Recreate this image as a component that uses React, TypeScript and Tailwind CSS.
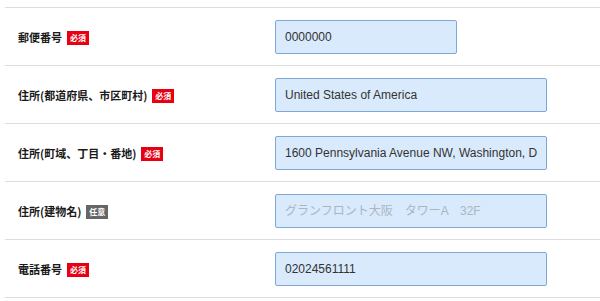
import React from "react";

type Row = {
  label: string;
  required: boolean;
  value?: string;
  placeholder?: string;
  short?: boolean;
};

const rows: Row[] = [
  { label: "郵便番号", required: true, value: "0000000", short: true },
  { label: "住所(都道府県、市区町村)", required: true, value: "United States of America" },
  { label: "住所(町域、丁目・番地)", required: true, value: "1600 Pennsylvania Avenue NW, Washington, DC 20500" },
  { label: "住所(建物名)", required: false, placeholder: "グランフロント大阪　タワーA　32F" },
  { label: "電話番号", required: true, value: "02024561111" },
];

export default function App() {
  return (
    <div className="w-[600px] h-[301px] bg-white pt-[7px] pl-[5px] overflow-hidden">
      <div className="border-t border-[#dddddd]">
        {rows.map((r, i) => (
          <div key={i} className="flex items-center h-[58px] border-b border-[#dddddd]">
            <div
              className="w-[258px] pl-[13px] pt-[2px] flex items-center gap-[5px] text-[11px] font-bold text-[#1a1a1a]"
              style={{ fontFamily: '"Noto Sans CJK JP", "Liberation Sans", sans-serif' }}
            >
              <span>{r.label}</span>
              {r.required ? (
                <span className="inline-flex items-center justify-center w-[22px] h-[14px] bg-[#e60012] text-white text-[8px] font-bold leading-none">
                  必須
                </span>
              ) : (
                <span className="inline-flex items-center justify-center w-[22px] h-[14px] bg-[#666666] text-white text-[8px] font-bold leading-none">
                  任意
                </span>
              )}
            </div>
            <div className="pl-[12px]">
              <input
                readOnly
                defaultValue={r.value}
                placeholder={r.placeholder}
                className={`${r.short ? "w-[182px]" : "w-[272px]"} h-[34px] px-[9px] bg-[#d9eafc] border border-[#7ea8d8] rounded-[2px] text-[12px] text-[#333333] placeholder:text-[#abb6c2] outline-none`}
                style={{ fontFamily: '"Liberation Sans", "Noto Sans CJK JP", sans-serif' }}
              />
            </div>
          </div>
        ))}
      </div>
    </div>
  );
}
